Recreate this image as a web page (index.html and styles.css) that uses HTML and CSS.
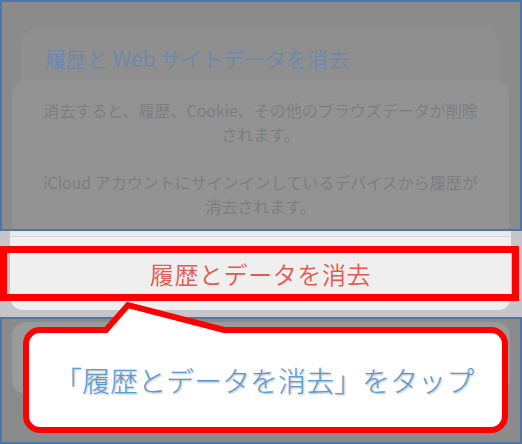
FILE: index.html
```html
<!DOCTYPE html>
<html lang="ja">
<head>
<meta charset="utf-8">
<title>履歴とWebサイトデータを消去</title>
<link rel="stylesheet" href="styles.css">
</head>
<body>
<div class="page">
  <section class="frame frame-top">
    <div class="title-card">
      <span class="title">履歴と Web サイトデータを消去</span>
    </div>
    <div class="msg-card">
      <p class="msg">消去すると、履歴、Cookie、その他のブラウズデータが削除<br>されます。</p>
      <p class="msg">iCloud アカウントにサインインしているデバイスから履歴が<br>消去されます。</p>
    </div>
  </section>
  <section class="band">
    <div class="msg-tail"></div>
    <div class="sep"></div>
    <div class="action"><span class="action-label">履歴とデータを消去</span></div>
  </section>
  <section class="frame frame-bottom">
    <div class="cancel"></div>
  </section>

  <div class="highlight"></div>
  <div class="callout">
    <svg class="callout-shape" width="492" height="140" viewBox="0 0 492 140" xmlns="http://www.w3.org/2000/svg">
      <path d="M 20 32 L 86 32 L 108 7 L 204 32 L 471 32 A 14 14 0 0 1 485 46 L 485 118 A 14 14 0 0 1 471 132 L 20 132 A 14 14 0 0 1 6 118 L 6 46 A 14 14 0 0 1 20 32 Z" fill="#ffffff" stroke="#ff0000" stroke-width="6" stroke-linejoin="miter"/>
    </svg>
    <div class="callout-text">「履歴とデータを消去」をタップ</div>
  </div>
</div>
</body>
</html>
```
FILE: styles.css
```css
html, body {
  margin: 0;
  padding: 0;
  background: #ffffff;
}
body {
  font-family: "Noto Sans CJK JP", "Noto Sans", sans-serif;
}
.page {
  position: relative;
  width: 522px;
  height: 444px;
  overflow: hidden;
  display: flex;
  flex-direction: column;
}
.frame {
  box-sizing: border-box;
  border: 2px solid #4a78aa;
  background: #8b8b8b;
  overflow: hidden;
  flex: none;
}
.frame-top {
  height: 231px;
}
.title-card {
  margin: 26px 21px 0 20px;
  height: 62px;
  box-sizing: border-box;
  padding: 18px 0 0 23px;
  background: #8f8f90;
  border-radius: 15px 15px 0 0;
}
.title {
  display: block;
  font-size: 21px;
  font-weight: 350;
  line-height: 24px;
  color: #6b87ab;
  white-space: nowrap;
}
.msg-card {
  position: relative;
  margin: -10px 11px 0 10px;
  height: 200px;
  box-sizing: border-box;
  padding-top: 18px;
  background: #939394;
  border-radius: 15px 15px 0 0;
  display: flex;
  flex-direction: column;
  gap: 24px;
}
.msg {
  margin: 0;
  font-size: 16px;
  font-weight: 350;
  line-height: 24px;
  color: #7b7b7c;
  text-align: center;
  white-space: nowrap;
}
.band {
  height: 86px;
  flex: none;
  background: #c6c6ca;
  padding: 0 11px 0 10px;
  display: flex;
  flex-direction: column;
}
.msg-tail {
  height: 5px;
  background: #eaeaec;
}
.sep {
  height: 1px;
  background: #d6d6d9;
}
.action {
  height: 73px;
  background: #efeff0;
  border-radius: 0 0 13px 13px;
  display: flex;
  align-items: center;
  justify-content: center;
}
.action-label {
  font-size: 24px;
  font-weight: 350;
  letter-spacing: 0.6px;
  color: #e35a4e;
  line-height: 30px;
}
.frame-bottom {
  height: 127px;
  padding: 3px 10px 0 10px;
}
.cancel {
  height: 72px;
  background: #9a9a9b;
  border-radius: 14px;
}
.highlight {
  position: absolute;
  left: 0;
  top: 246px;
  width: 519px;
  height: 55px;
  box-sizing: border-box;
  border: 7px solid #ff0000;
}
.callout {
  position: absolute;
  left: 20px;
  top: 298px;
  width: 492px;
  height: 140px;
}
.callout-shape {
  position: absolute;
  left: 0;
  top: 0;
}
.callout-text {
  position: relative;
  margin-top: 29px;
  height: 106px;
  padding-right: 4px;
  display: flex;
  align-items: center;
  justify-content: center;
  font-size: 28px;
  font-weight: 300;
  color: #5b9bd5;
  text-shadow: 1px 1px 2px rgba(0, 0, 0, 0.3);
  white-space: nowrap;
}
```
